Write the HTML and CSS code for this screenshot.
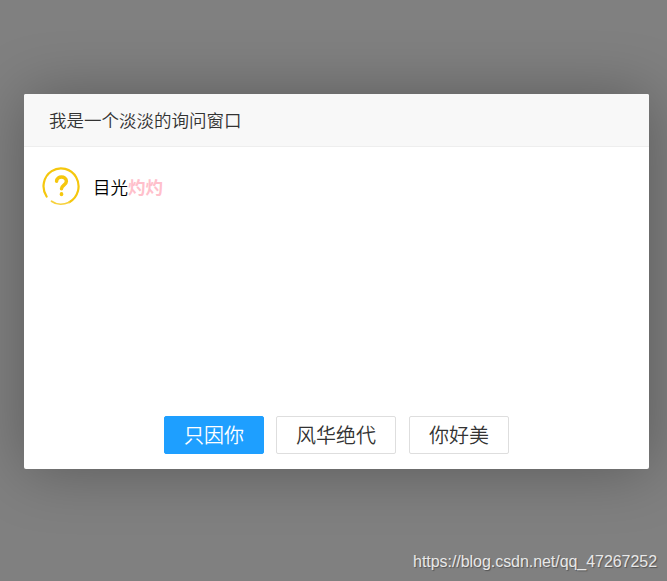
FILE: index.html
```html
<!DOCTYPE html>
<html lang="zh-CN">
<head>
<meta charset="utf-8">
<title>询问窗口</title>
<link rel="stylesheet" href="styles.css">
</head>
<body>
<main class="dialog">
  <header class="title">我是一个淡淡的询问窗口</header>
  <section class="content">
    <svg class="icon" viewBox="0 0 38 40" fill="none" stroke="#f5c70d" stroke-linecap="round">
      <path d="M4.600 30.500A17.500 18 0 1 1 27.300 36.200" stroke-width="2.200"/>
      <path d="M27.300 36.200C21 39 14 38.500 9.500 35.200" stroke-width="1.700" stroke="#f7d13c"/>
      <path d="M14.600 15.300C14.600 9.600 24.400 9.600 24.400 15.200C24.400 19 19.500 19.200 19.500 22.800" stroke-width="3.500"/>
      <path d="M19.500 27.900v.6" stroke-width="3.600"/>
    </svg>
    <p class="message">目光<b class="accent">灼灼</b></p>
  </section>
  <footer class="actions">
    <button class="btn primary">只因你</button>
    <button class="btn">风华绝代</button>
    <button class="btn">你好美</button>
  </footer>
</main>
<div class="watermark">https://blog.csdn.net/qq_47267252</div>
</body>
</html>
```
FILE: styles.css
```css
* {
  box-sizing: border-box;
}

body {
  margin: 0;
  height: 581px;
  padding: 94px 18px 0 24px;
  overflow: hidden;
  background: #808080;
  font-family: "Noto Sans CJK SC", sans-serif;
  font-size: 17.5px;
  font-weight: 350;
}

.dialog {
  display: flex;
  flex-direction: column;
  height: 375px;
  background: #fff;
  border-radius: 2px;
  box-shadow: 1px 1px 62px rgba(0, 0, 0, .3);
}

.title {
  height: 53px;
  padding-left: 25px;
  line-height: 51px;
  color: #333;
  background: #f8f8f8;
  border-bottom: 1px solid #eee;
  border-radius: 2px 2px 0 0;
}

.content {
  display: flex;
  flex: 1;
  align-items: flex-start;
  gap: 13px;
  padding: 19px 18px 0;
}

.icon {
  width: 38px;
  height: 40px;
}

.message {
  margin: 6px 0 0;
  line-height: 30px;
  color: #000;
}

.accent {
  color: pink;
  font-weight: 700;
}

.actions {
  display: flex;
  justify-content: center;
  gap: 12px;
  padding-bottom: 15px;
}

.btn {
  height: 38px;
  padding: 0 19px;
  border: 1px solid #dedede;
  border-radius: 2px;
  background: #fff;
  color: #333;
  font: 350 20px/36px "Noto Sans CJK SC", sans-serif;
}

.btn:last-child {
  margin-left: 1px;
}

.primary {
  border-color: #1e9fff;
  background: #1e9fff;
  color: #fff;
}

.watermark {
  margin-top: 83px;
  margin-right: -8px;
  line-height: 20px;
  text-align: right;
  font-family: "Liberation Sans", Arial, sans-serif;
  font-size: 16px;
  font-weight: 400;
  letter-spacing: -.05px;
  color: #e8e8e8;
  text-shadow: 1px 1px 1px rgba(0, 0, 0, .35);
}
```
